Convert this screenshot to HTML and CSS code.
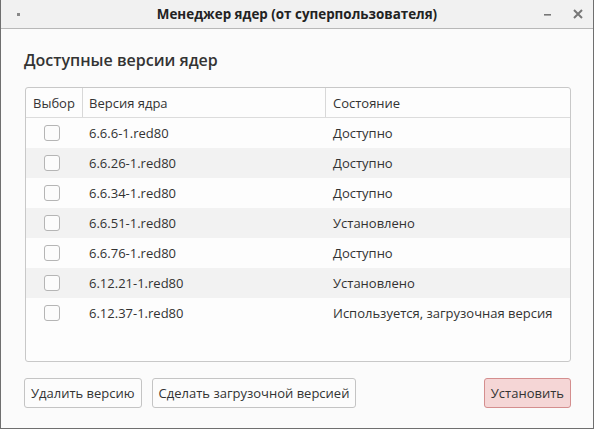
FILE: index.html
```html
<!DOCTYPE html>
<html lang="ru">
<head>
<meta charset="utf-8">
<title>Менеджер ядер</title>
<link rel="stylesheet" href="styles.css">
</head>
<body>
<div class="window">
  <div class="titlebar">
    <span class="dot"></span>
    <span class="title">Менеджер ядер (от суперпользователя)</span>
    <span class="controls">
      <svg class="ctl" width="12" height="12" viewBox="0 0 12 12"><rect x="2" y="6" width="7" height="1.6" fill="#777"/></svg>
      <svg class="ctl" width="14" height="14" viewBox="0 0 14 14"><path d="M3 3 L11 11 M11 3 L3 11" stroke="#777" stroke-width="2"/></svg>
    </span>
  </div>
  <div class="content">
    <h1 class="heading">Доступные версии ядер</h1>
    <div class="table">
      <div class="row head">
        <div class="c c1">Выбор</div>
        <div class="c c2">Версия ядра</div>
        <div class="c c3">Состояние</div>
      </div>
      <div class="row"><div class="c c1"><span class="cb"></span></div><div class="c c2">6.6.6-1.red80</div><div class="c c3">Доступно</div></div>
      <div class="row alt"><div class="c c1"><span class="cb"></span></div><div class="c c2">6.6.26-1.red80</div><div class="c c3">Доступно</div></div>
      <div class="row"><div class="c c1"><span class="cb"></span></div><div class="c c2">6.6.34-1.red80</div><div class="c c3">Доступно</div></div>
      <div class="row alt"><div class="c c1"><span class="cb"></span></div><div class="c c2">6.6.51-1.red80</div><div class="c c3">Установлено</div></div>
      <div class="row"><div class="c c1"><span class="cb"></span></div><div class="c c2">6.6.76-1.red80</div><div class="c c3">Доступно</div></div>
      <div class="row alt"><div class="c c1"><span class="cb"></span></div><div class="c c2">6.12.21-1.red80</div><div class="c c3">Установлено</div></div>
      <div class="row"><div class="c c1"><span class="cb"></span></div><div class="c c2">6.12.37-1.red80</div><div class="c c3">Используется, загрузочная версия</div></div>
    </div>
    <div class="buttons">
      <button class="btn">Удалить версию</button>
      <button class="btn">Сделать загрузочной версией</button>
      <span class="spacer"></span>
      <button class="btn primary">Установить</button>
    </div>
  </div>
</div>
</body>
</html>
```
FILE: styles.css
```css
html, body {
  margin: 0;
  padding: 0;
}
body {
  width: 594px;
  height: 429px;
  font-family: "Open Sans", "Noto Sans", sans-serif;
  color: #333;
  background: #fbfbfb;
}
.window {
  box-sizing: border-box;
  width: 594px;
  height: 429px;
  border: 1px solid #6f6f6f;
  border-top: none;
  display: flex;
  flex-direction: column;
  background: #fbfbfb;
}
.titlebar {
  height: 28px;
  flex: none;
  background: #f1f1f1;
  border-bottom: 1px solid #b8b8b8;
  display: flex;
  align-items: center;
  position: relative;
}
.dot {
  width: 3px;
  height: 3px;
  background: #888;
  margin-left: 16px;
}
.title {
  position: absolute;
  left: 0;
  right: 0;
  text-align: center;
  font-weight: 700;
  font-size: 13.4px;
  color: #222;
  top: 5px;
}
.controls {
  margin-left: auto;
  display: flex;
  align-items: center;
  gap: 17px;
  margin-right: 8px;
  position: relative;
}
.content {
  flex: 1;
  display: flex;
  flex-direction: column;
  padding: 0 22px 0 23px;
}
.heading {
  font-size: 16px;
  font-weight: 600;
  margin: 20px 0 0 0;
  color: #333;
  line-height: 22px;
}
.table {
  margin: 16px 0 0 1px;
  height: 273px;
  border: 1px solid #c8c8c8;
  border-radius: 3px;
  background: #fdfdfd;
  font-size: 13px;
  overflow: hidden;
}
.row {
  display: flex;
  height: 30px;
  align-items: center;
}
.row.alt {
  background: #f2f2f2;
}
.row.head {
  height: 29px;
  border-bottom: 1px solid #dcdcdc;
}
.c {
  box-sizing: border-box;
  height: 100%;
  display: flex;
  align-items: center;
}
.c1 {
  width: 57px;
  padding-left: 18px;
}
.head .c1 {
  padding-left: 7px;
}
.c2 {
  width: 243px;
  padding-left: 6px;
}
.c3 {
  flex: 1;
  padding-left: 7px;
}
.head .c1, .head .c2 {
  border-right: 1px solid #d8d8d8;
}
.cb {
  box-sizing: border-box;
  width: 16px;
  height: 16px;
  border: 1px solid #b5b5b5;
  border-radius: 3px;
  background: #fcfcfc;
}
.buttons {
  display: flex;
  margin-top: 16px;
  gap: 10px;
}
.spacer {
  flex: 1;
}
.btn {
  font-family: "Open Sans", "Noto Sans", sans-serif;
  font-size: 13px;
  color: #333;
  height: 30px;
  padding: 0 6px;
  border: 1px solid #c4c4c4;
  border-radius: 3px;
  background: #fcfcfc;
}
.btn.primary {
  background: #f5d6d6;
  border-color: #d48e8e;
}
```
